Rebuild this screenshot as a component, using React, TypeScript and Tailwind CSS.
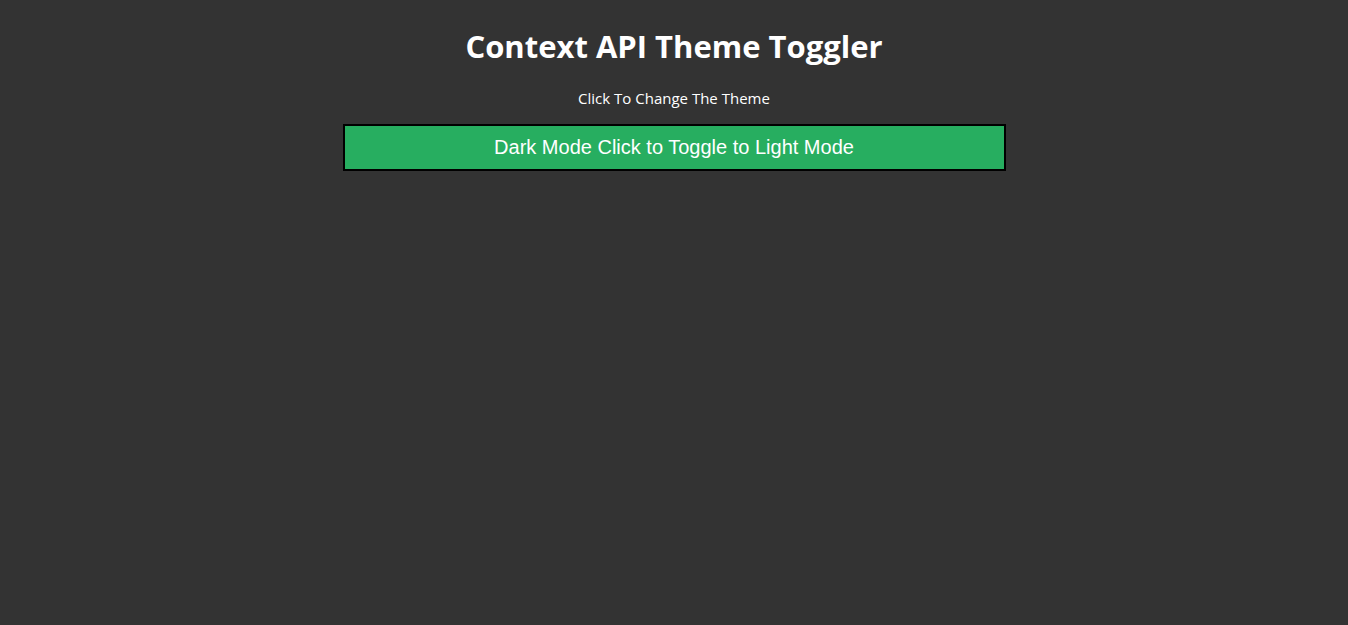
import { createContext, useContext, useState } from "react";

type Theme = { dark: boolean; toggle: () => void };

const ThemeContext = createContext<Theme>({ dark: true, toggle: () => {} });

function ThemeButton() {
  const { dark, toggle } = useContext(ThemeContext);
  return (
    <button
      type="button"
      onClick={toggle}
      className="mt-4 w-full cursor-pointer border-2 border-black bg-[#27ae60] p-2.5 font-['Liberation_Sans',Arial,sans-serif] text-xl leading-[23px] text-white"
    >
      {dark
        ? "Dark Mode Click to Toggle to Light Mode"
        : "Light Mode Click to Toggle to Dark Mode"}
    </button>
  );
}

export default function App() {
  const [dark, setDark] = useState(true);
  return (
    <ThemeContext.Provider value={{ dark, toggle: () => setDark(!dark) }}>
      <main
        className={
          dark
            ? "min-h-screen bg-[#333333] px-4 pt-6 text-center font-['Open_Sans','Noto_Sans',sans-serif] text-white"
            : "min-h-screen bg-white px-4 pt-6 text-center font-['Open_Sans','Noto_Sans',sans-serif] text-[#333333]"
        }
      >
        <div className="mx-auto max-w-[663px]">
          <h1 className="text-[31px] leading-[44px] font-bold">
            Context API Theme Toggler
          </h1>
          <p className="mt-5 text-[15px] leading-5">Click To Change The Theme</p>
          <ThemeButton />
        </div>
      </main>
    </ThemeContext.Provider>
  );
}
